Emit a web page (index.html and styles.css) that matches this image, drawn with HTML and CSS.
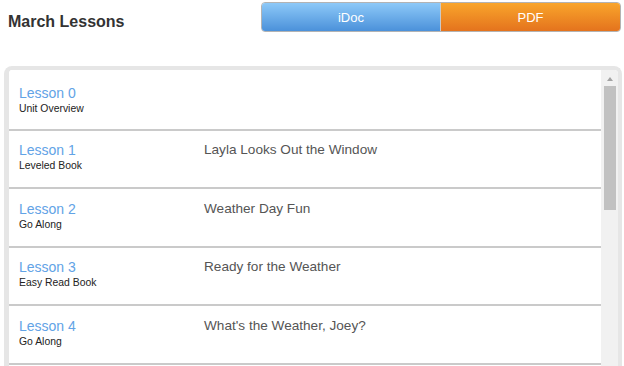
FILE: index.html
```html
<!DOCTYPE html>
<html lang="en">
<head>
<meta charset="utf-8">
<title>March Lessons</title>
<link rel="stylesheet" href="styles.css">
</head>
<body>
<div class="header">
  <h1 class="title">March Lessons</h1>
  <div class="toggle">
    <button class="btn btn-idoc">iDoc</button>
    <button class="btn btn-pdf">PDF</button>
  </div>
</div>
<div class="panel">
  <ul class="list">
    <li class="row">
      <div class="lesson"><span class="lesson-name">Lesson 0</span><span class="lesson-type">Unit Overview</span></div>
      <div class="book"></div>
    </li>
    <li class="row">
      <div class="lesson"><span class="lesson-name">Lesson 1</span><span class="lesson-type">Leveled Book</span></div>
      <div class="book">Layla Looks Out the Window</div>
    </li>
    <li class="row">
      <div class="lesson"><span class="lesson-name">Lesson 2</span><span class="lesson-type">Go Along</span></div>
      <div class="book">Weather Day Fun</div>
    </li>
    <li class="row">
      <div class="lesson"><span class="lesson-name">Lesson 3</span><span class="lesson-type">Easy Read Book</span></div>
      <div class="book">Ready for the Weather</div>
    </li>
    <li class="row">
      <div class="lesson"><span class="lesson-name">Lesson 4</span><span class="lesson-type">Go Along</span></div>
      <div class="book">What's the Weather, Joey?</div>
    </li>
  </ul>
  <div class="scrollbar">
    <div class="arrow"></div>
    <div class="thumb"></div>
  </div>
</div>
</body>
</html>
```

FILE: styles.css
```css
html, body {
  margin: 0;
  padding: 0;
  overflow: hidden;
  background: #ffffff;
  font-family: "Liberation Sans", Arial, sans-serif;
}

.header {
  display: flex;
  justify-content: space-between;
  align-items: flex-start;
  padding: 2px 3px 0 8px;
  height: 64px;
  box-sizing: border-box;
}

.title {
  margin: 10px 0 0 0;
  font-size: 16px;
  line-height: 20px;
  font-weight: bold;
  color: #333333;
}

.toggle {
  display: flex;
  width: 360px;
  height: 30px;
  border: 1px solid #b3b3b3;
  border-radius: 4px;
  overflow: hidden;
  box-sizing: border-box;
}

.btn {
  border: 0;
  margin: 0;
  padding: 0;
  font-family: "Liberation Sans", Arial, sans-serif;
  font-size: 13px;
  color: #ffffff;
  height: 100%;
}

.btn-idoc {
  width: 179px;
  background: linear-gradient(to bottom, #8dc9f8, #4b91da);
  border-right: 1px solid #c9c9c9;
}

.btn-pdf {
  flex: 1;
  background: linear-gradient(to bottom, #f9a52b, #e4731d);
}

.panel {
  display: flex;
  margin: 2px 2px 0 4px;
  height: 320px;
  border-style: solid;
  border-color: #e6e6e6;
  border-width: 4px 4px 0 5px;
  border-radius: 8px 8px 0 0;
  overflow: hidden;
}

.list {
  list-style: none;
  margin: 0;
  padding: 2px 0 0 0;
  flex: 1;
  background: #ffffff;
}

.row {
  display: flex;
  height: 58.5px;
  box-sizing: border-box;
  border-bottom: 2px solid #cacaca;
  padding: 11.5px 10px 0 10px;
}

.row:first-child {
  padding-top: 12.5px;
}

.lesson {
  display: flex;
  flex-direction: column;
  width: 185px;
}

.lesson-name {
  font-size: 14px;
  line-height: 16px;
  color: #62a3e6;
}

.lesson-type {
  margin-top: 1px;
  font-size: 10.4px;
  line-height: 14px;
  color: #222222;
}

.book {
  font-size: 13.6px;
  line-height: 16px;
  color: #555555;
}

.scrollbar {
  width: 17px;
  background: #f1f1f1;
  display: flex;
  flex-direction: column;
  align-items: center;
}

.arrow {
  width: 0;
  height: 0;
  margin-top: 7px;
  border-left: 3.5px solid transparent;
  border-right: 3.5px solid transparent;
  border-bottom: 4px solid #a3a3a3;
}

.thumb {
  margin-top: 5px;
  width: 12px;
  height: 124px;
  background: #c1c1c1;
}
```
